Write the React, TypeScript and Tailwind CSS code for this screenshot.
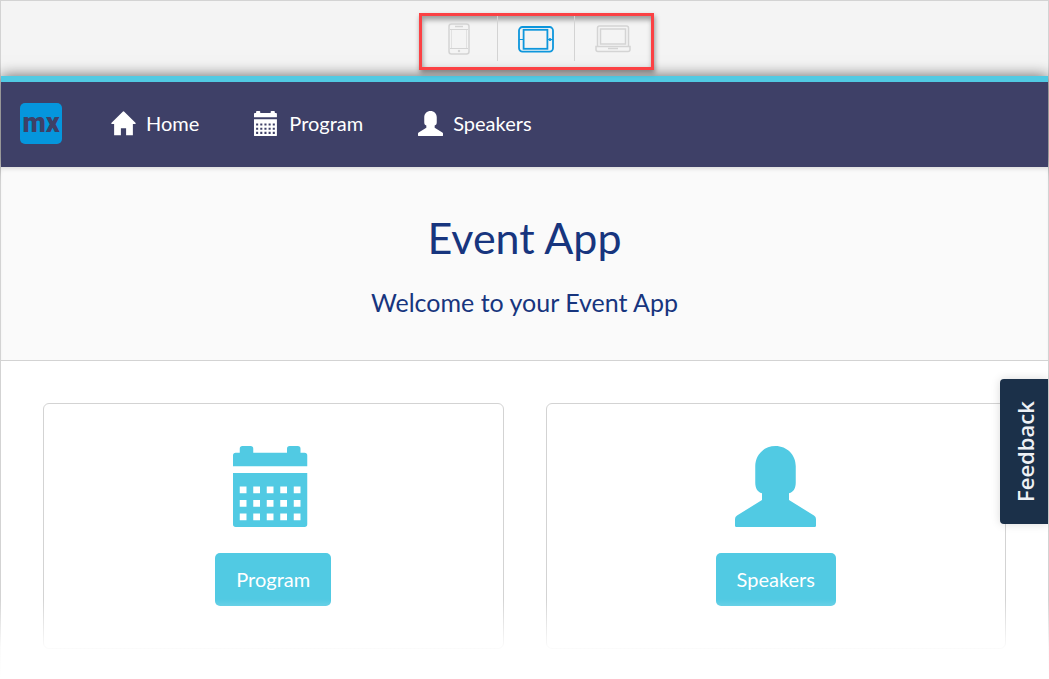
import type { ReactNode } from "react";

type IconProps = { className?: string };

function PhoneIcon() {
  return (
    <svg width="22" height="32" viewBox="0 0 22 32" fill="none" stroke="#d4d4d4" strokeWidth="1.500" aria-hidden="true">
      <rect x="1" y="1" width="20" height="30" rx="2.500" />
      <path d="M2 6.500H20M2 25.500H20" strokeWidth="1" />
      <path d="M3.500 7V25M18.500 7V25" strokeWidth="1" strokeOpacity="0.6" />
      <path d="M7 3.500h8" />
      <circle cx="11" cy="28" r="1.200" fill="#d4d4d4" stroke="none" />
    </svg>
  );
}

function TabletIcon() {
  return (
    <svg width="36" height="28" viewBox="0 0 36 28" fill="none" stroke="#0d96dc" strokeWidth="1.800" aria-hidden="true">
      <rect x="1" y="2" width="34" height="24.600" rx="3.500" />
      <rect x="5.600" y="4.800" width="23.800" height="19" />
      <path d="M1 14.500h4M30 14.500h5" strokeWidth="1" />
      <circle cx="32" cy="14.500" r="1.500" fill="#0d96dc" stroke="none" />
    </svg>
  );
}

function LaptopIcon() {
  return (
    <svg width="36" height="28" viewBox="0 0 36 28" fill="none" stroke="#d4d4d4" strokeWidth="1.500" aria-hidden="true">
      <path d="M2.500 21.500V3Q2.500 1 4.500 1H31.500Q33.500 1 33.500 3V21.500" />
      <rect x="5.500" y="4" width="25" height="15" />
      <path d="M1 21.500H35V24.500Q35 26.500 33 26.500H3Q1 26.500 1 24.500Z" />
      <path d="M13 23.500H23" />
    </svg>
  );
}

function HomeIcon({ className }: IconProps) {
  return (
    <svg className={className} viewBox="0 0 24 24" fill="currentColor" aria-hidden="true">
      <path d="M11.500 0.400Q12 0 12.500 0.400L23.700 11.600Q24 12.300 23.300 12.400H21V23.300H14.500V16.500H9.500V23.300H3V12.400H0.700Q0 12.300 0.300 11.600Z" />
    </svg>
  );
}

const DATE_COLUMNS = [1, 3, 5, 7, 9];
const DATE_ROWS = [6, 8, 10];

function CalendarIcon({ className }: IconProps) {
  const holes = DATE_ROWS.flatMap((y) => DATE_COLUMNS.map((x) => `M${x} ${y}v1h1v-1z`)).join("");
  return (
    <svg className={className} viewBox="0 0 12 12" fill="currentColor" fillRule="evenodd" aria-hidden="true">
      <path d="M0 3V1.400Q0 1 .4 1H1V.4Q1 0 1.400 0H2.600Q3 0 3 .4V1H8V.4Q8 0 8.400 0H9.600Q10 0 10 .4V1H10.600Q11 1 11 1.400V3Z" />
      <path d={`M0 4H11V11.600Q11 12 10.600 12H.4Q0 12 0 11.600Z${holes}`} />
    </svg>
  );
}

function UserIcon({ className }: IconProps) {
  return (
    <svg className={className} viewBox="0 0 12 12" fill="currentColor" aria-hidden="true">
      <path d="M6 0C7.700 0 9 1.300 9 3V5.400C9 6.200 8.700 6.800 8 7V8L11.700 10.300Q12 10.500 12 10.800V11.800Q12 12 11.800 12H.2Q0 12 0 11.800V10.800Q0 10.500 .3 10.300L4 8V7C3.300 6.800 3 6.200 3 5.400V3C3 1.300 4.300 0 6 0Z" />
    </svg>
  );
}

function DeviceButton({ label, active = false, children }: { label: string; active?: boolean; children: ReactNode }) {
  return (
    <button type="button" aria-label={label} aria-pressed={active} className="flex flex-1 items-center justify-center">
      {children}
    </button>
  );
}

function NavLink({ label, icon }: { label: string; icon: ReactNode }) {
  return (
    <a href={`#${label.toLowerCase()}`} className="flex items-center gap-[10px] text-white">
      {icon}
      {label}
    </a>
  );
}

function Card({ label, icon }: { label: string; icon: ReactNode }) {
  return (
    <section className="flex flex-1 flex-col items-center gap-[26px] rounded-md border border-[#d3d3d3] pt-[42px] pb-[42px] text-[#51cae3]">
      {icon}
      <button type="button" className="rounded-[5px] bg-[#51cae3] px-[21px] py-[13px] text-[20px] leading-[27px] text-white">
        {label}
      </button>
    </section>
  );
}

export default function App() {
  return (
    <div className="relative border border-b-0 border-[#d3d3d3] bg-white font-['Lato',sans-serif]">
      <div className="flex h-[75px] justify-center bg-[#f4f4f4] pt-3 pl-[23px]">
        <div className="relative z-10 flex h-[57px] w-[235px] border-3 border-[#fb4144] pb-[6px] shadow-[1px_3px_5px_rgba(0,0,0,0.4),inset_1px_4px_5px_rgba(0,0,0,0.35)]">
          <DeviceButton label="Phone">
            <PhoneIcon />
          </DeviceButton>
          <div className="w-px bg-[#d3d3d3]" />
          <DeviceButton label="Tablet" active>
            <TabletIcon />
          </DeviceButton>
          <div className="w-px bg-[#d3d3d3]" />
          <DeviceButton label="Laptop">
            <LaptopIcon />
          </DeviceButton>
        </div>
      </div>

      <header className="relative border-t-[6px] border-[#51cae3] bg-[#3e4067] shadow-[0_0_14px_rgba(0,0,0,0.6)]">
        <nav className="flex h-[85px] items-center pb-[3px] pl-[19px] text-[20px] leading-6">
          <a
            href="#top"
            className="mr-[49px] flex h-[41px] w-[42px] items-center justify-center rounded-[5px] bg-[#0596dd] font-['Roboto',sans-serif] text-[27px] leading-none font-black text-[#3e4067]"
          >
            mx
          </a>
          <div className="flex gap-[55px]">
            <NavLink label="Home" icon={<HomeIcon className="size-[25px]" />} />
            <NavLink label="Program" icon={<CalendarIcon className="size-[25px]" />} />
            <NavLink label="Speakers" icon={<UserIcon className="size-[25px]" />} />
          </div>
        </nav>
      </header>

      <main>
        <div className="relative border-b border-[#d3d3d3] bg-[#fafafa] pt-[41px] pb-[41px] text-center text-[#17357e] shadow-[inset_0_4px_4px_-2px_rgba(0,0,0,0.12)]">
          <h1 className="text-[43px] leading-[60px]">Event App</h1>
          <p className="mt-[17px] text-[25px] leading-[34px]">Welcome to your Event App</p>
        </div>
        <div className="flex gap-[42px] px-[42px] pt-[42px] pb-[30px]">
          <Card label="Program" icon={<CalendarIcon className="size-[81px]" />} />
          <Card label="Speakers" icon={<UserIcon className="size-[81px]" />} />
        </div>
      </main>

      <button
        type="button"
        className="absolute top-[378px] right-0 flex h-[145px] w-12 rotate-180 items-center justify-center rounded-r-[4px] bg-[#1b3049] pr-[2px] font-['Open_Sans',sans-serif] text-[22px] font-semibold text-[#eef1f5] shadow-[0_0_10px_rgba(0,0,0,0.15)] [writing-mode:vertical-rl]"
      >
        Feedback
      </button>
      <div className="pointer-events-none absolute -inset-x-px bottom-0 h-[80px] bg-linear-to-b from-transparent via-white/90 via-60% to-white" />
    </div>
  );
}
